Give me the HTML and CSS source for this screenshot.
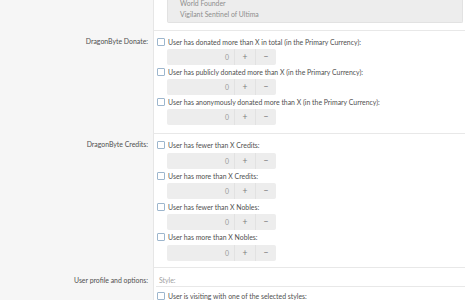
FILE: index.html
```html
<!DOCTYPE html>
<html>
<head>
<meta charset="utf-8">
<link rel="stylesheet" href="styles.css">
</head>
<body>
<div class="form">
  <div class="row row-first">
    <div class="label"></div>
    <div class="ctrl ctrl-first">
      <div class="listbox">
        <div class="list-inner">
          <div class="opt">World Founder</div>
          <div class="opt">Vigilant Sentinel of Ultima</div>
          <div class="opt">Defender of the Realm</div>
        </div>
      </div>
    </div>
  </div>

  <div class="row">
    <div class="label">DragonByte Donate:</div>
    <div class="ctrl ctrl-donate">
      <div class="check"><span class="box"></span>User has donated more than X in total (in the Primary Currency):</div>
      <div class="num"><span class="val">0</span><span class="btn">+</span><span class="btn">−</span></div>
      <div class="check"><span class="box"></span>User has publicly donated more than X (in the Primary Currency):</div>
      <div class="num"><span class="val">0</span><span class="btn">+</span><span class="btn">−</span></div>
      <div class="check"><span class="box"></span>User has anonymously donated more than X (in the Primary Currency):</div>
      <div class="num"><span class="val">0</span><span class="btn">+</span><span class="btn">−</span></div>
    </div>
  </div>

  <div class="row">
    <div class="label">DragonByte Credits:</div>
    <div class="ctrl ctrl-credits">
      <div class="check"><span class="box"></span>User has fewer than X Credits:</div>
      <div class="num"><span class="val">0</span><span class="btn">+</span><span class="btn">−</span></div>
      <div class="check"><span class="box"></span>User has more than X Credits:</div>
      <div class="num"><span class="val">0</span><span class="btn">+</span><span class="btn">−</span></div>
      <div class="check"><span class="box"></span>User has fewer than X Nobles:</div>
      <div class="num"><span class="val">0</span><span class="btn">+</span><span class="btn">−</span></div>
      <div class="check"><span class="box"></span>User has more than X Nobles:</div>
      <div class="num"><span class="val">0</span><span class="btn">+</span><span class="btn">−</span></div>
    </div>
  </div>

  <div class="row">
    <div class="label label-profile">User profile and options:</div>
    <div class="ctrl ctrl-profile">
      <div class="hint">Style:</div>
      <div class="check"><span class="box"></span>User is visiting with one of the selected styles:</div>
      <div class="sub-line"></div>
    </div>
  </div>
</div>
</body>
</html>
```

FILE: styles.css
```css
html, body {
  margin: 0;
  padding: 0;
  background: #fff;
}
body {
  font-family: "Lato", "Open Sans", sans-serif;
  font-size: 6.9px;
  color: #505050;
  width: 465px;
  height: 300px;
  overflow: hidden;
}
.form {
  display: flex;
  flex-direction: column;
}
.row {
  display: grid;
  grid-template-columns: 153px 1fr;
}
.label {
  background: #f6f6f6;
  text-align: right;
  padding: 4px 5px 0 0;
  line-height: 14px;
}
.ctrl {
  border-left: 1px solid #e6e6e6;
  border-top: 1px solid #e8e8e8;
  padding: 4px 0 6px 3px;
}
.ctrl-donate {
  padding-bottom: 8px;
}
.ctrl-credits .check {
  height: 14.7px;
}
.ctrl-first {
  border-top: none;
  padding: 0 2px 7px 13px;
}
.listbox {
  height: 23px;
  overflow: hidden;
  background: #ededed;
  border: 1px solid #e2e2e2;
  border-top: none;
  border-radius: 0 0 2px 2px;
  box-sizing: border-box;
}
.list-inner {
  margin-top: -2px;
  padding-left: 12px;
}
.opt {
  line-height: 11px;
  color: #8e8e8e;
}
.check {
  display: flex;
  align-items: center;
  height: 14px;
  white-space: nowrap;
}
.box {
  width: 6px;
  height: 6px;
  border: 1px solid #9db6cd;
  border-radius: 1px;
  background: #fff;
  margin-right: 3px;
  flex: none;
}
.num {
  display: flex;
  width: 109px;
  height: 16px;
  margin-left: 10px;
  background: #ededed;
  border-radius: 2px;
  color: #8a8a8a;
  line-height: 16px;
}
.val {
  width: 68px;
  text-align: right;
  padding-right: 5px;
  box-sizing: border-box;
  border-right: 1px solid #e2e2e2;
  color: #9a9a9a;
}
.btn {
  width: 20px;
  text-align: center;
  font-size: 8.5px;
  color: #7a7a7a;
}
.btn + .btn {
  border-left: 1px solid #e2e2e2;
}
.label-profile {
  padding-top: 7px;
  line-height: 13px;
}
.ctrl-profile {
  padding: 7px 0 0 0;
}
.hint {
  line-height: 11px;
  padding-left: 3px;
  color: #a0a0a0;
  border-bottom: 1px solid #e8e8e8;
  margin-left: 2px;
}
.ctrl-profile .check {
  padding-left: 3px;
  margin-top: 2px;
}
.sub-line {
  margin-left: 13px;
  border-top: 1px solid #e8e8e8;
  margin-top: 1px;
}
```
